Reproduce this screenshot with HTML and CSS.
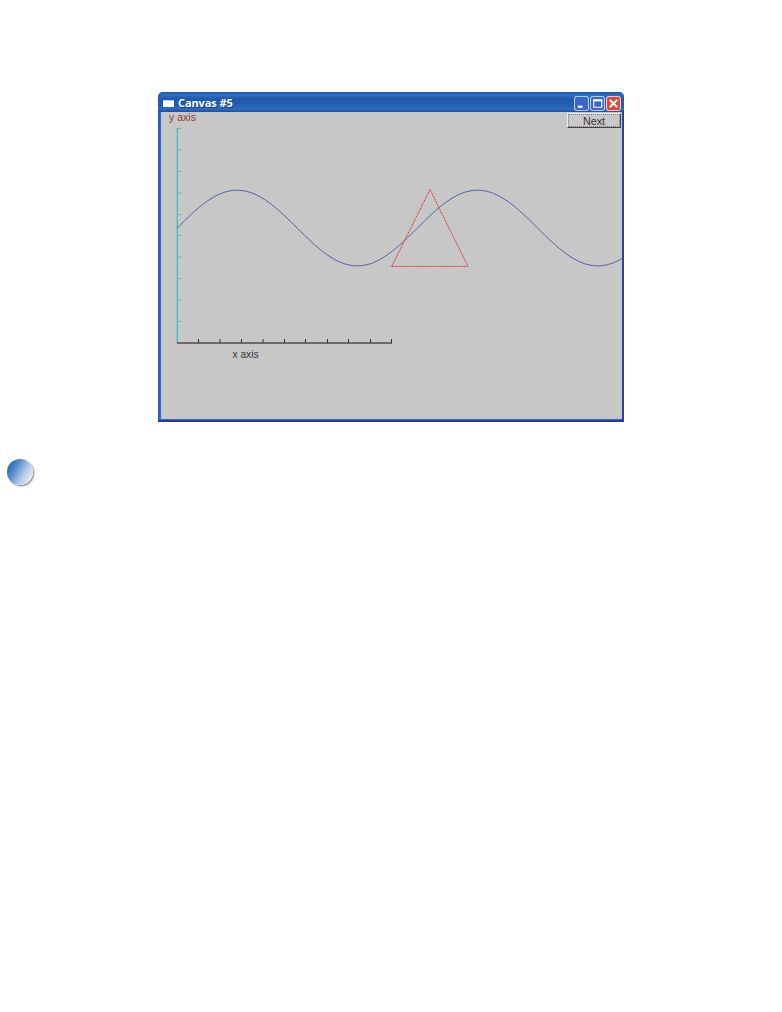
FILE: index.html
```html
<!DOCTYPE html>
<html lang="en">
<head>
<meta charset="utf-8">
<title>Canvas #5</title>
<link rel="stylesheet" href="styles.css">
</head>
<body>
<main class="page">
  <section class="window">
    <header class="titlebar">
      <span class="app-icon"></span>
      <h1 class="title">Canvas #5</h1>
      <div class="controls">
        <svg class="control" viewBox="0 0 14 14"><rect class="blue" x=".5" y=".5" width="13" height="13" rx="2"/><path class="glyph" d="M3.500 10h4.500" stroke-width="2"/></svg>
        <svg class="control" viewBox="0 0 14 14"><rect class="blue" x=".5" y=".5" width="13" height="13" rx="2"/><path class="glyph" d="M3.500 4v6.500h7.500v-6.500" stroke-width="1"/><path class="glyph" d="M3 4h8.500" stroke-width="2"/></svg>
        <svg class="control" viewBox="0 0 14 14"><rect class="red" x=".5" y=".5" width="13" height="13" rx="2"/><path class="glyph" d="M3.500 3.500l7 7M10.500 3.500l-7 7" stroke-width="1.700"/></svg>
      </div>
    </header>
    <div class="content">
      <svg class="plot" viewBox="161 112 461 307">
        <clipPath id="plot-area"><rect x="161" y="112" width="461" height="307"/></clipPath>
        <path class="y-axis" d="M177.300 128V343"/>
        <path class="y-ticks" d="M177 128.500h4M177 150h4M177 171.500h4M177 193h4M177 214.500h4M177 235.500h4M177 257h4M177 278.500h4M177 300h4M177 321.500h4"/>
        <path class="x-axis" d="M177 343h215"/>
        <path class="x-ticks" d="M198.500 339v4M220 339v4M241.500 339v4M263 339v4M284.500 339v4M305.500 339v4M327.500 339v4M348.500 339v4M370.500 339v4M391.500 339v4"/>
        <path class="sine" clip-path="url(#plot-area)" d="M177 228.300C196.600 208.500 215.300 190.200 237.100 190.200C258.900 190.200 277.600 208.500 297.200 228C316.800 247.500 335.500 265.900 357.300 265.900C379.100 265.900 397.800 247.500 417.400 228C437 208.500 455.700 190.200 477.500 190.200C499.300 190.200 518 208.500 537.600 228C557.200 247.500 575.900 265.900 597.700 265.900C619.500 265.900 638.200 247.500 657.800 228"/>
        <path class="triangle" d="M391.700 266.400L430 189.500L468 266.400Z"/>
        <text class="label y-label" x="169" y="120.500" textLength="27" lengthAdjust="spacingAndGlyphs">y axis</text>
        <text class="label" x="232.500" y="358" textLength="26" lengthAdjust="spacingAndGlyphs">x axis</text>
      </svg>
      <button class="next"><span class="next-text"><svg class="next-label" viewBox="0 0 50 13"><text class="label" x="14" y="10.500" textLength="22" lengthAdjust="spacingAndGlyphs">Next</text></svg></span></button>
    </div>
  </section>
  <span class="bullet"></span>
</main>
</body>
</html>
```
FILE: styles.css
```css
* { box-sizing: border-box; }
body { margin: 0; background: #fff; font-family: "Liberation Sans", Arial, sans-serif; }
.page { width: 782px; height: 1012px; padding-top: 92px; overflow: hidden; }
.window {
  display: flex;
  flex-direction: column;
  width: 466px;
  height: 330px;
  margin-left: 158px;
  border-radius: 5px 5px 0 0;
  background: linear-gradient(90deg, #2a52ae, #2e6ac8 2px, #2e6ac8 461px, #3a68bd 463px, #263f9c 465px);
  border-bottom: 2px solid #2a3a96;
}
.titlebar {
  display: flex;
  align-items: center;
  height: 20px;
  padding: 2px 4px 0 5px;
  border-radius: 5px 5px 0 0;
  background: linear-gradient(#1d55a0, #2d6fc3 3px, #2158a9 7px, #2360b6 14px, #2b6bc3 17px, #1f4fa0);
}
.app-icon { width: 11px; height: 7px; margin-top: 1px; background: #fff; border-top: 1px solid #b8d0f0; }
.title {
  margin: 0 0 0 4px;
  color: #fff;
  font: bold 11px/16px "Open Sans", sans-serif;
  letter-spacing: -.1px;
  text-shadow: 1px 1px 0 #173e82;
}
.controls { display: flex; gap: 1px; margin-left: auto; padding-top: 1px; }
.control { display: block; width: 15px; height: 15px; }
.control:last-child { margin-right: -1px; }
.control:first-child { margin-right: 0; }
.blue { fill: #3867c4; stroke: #b5caec; }
.red { fill: #da4b35; stroke: #f2c9c6; }
.glyph { fill: none; stroke: #fff; }
.content {
  position: relative;
  width: 461px;
  height: 307px;
  margin-left: 3px;
  background: #c7c7c7;
}
.plot { display: block; width: 461px; height: 307px; overflow: visible; }
.plot path { fill: none; }
.plot .y-axis { stroke: #50bfc0; stroke-width: 1.5; }
.plot .y-ticks { stroke: #50b5b6; }
.plot .x-axis { stroke: #4c4c4c; stroke-width: 1.4; }
.plot .x-ticks { stroke: #303030; }
.plot .sine { stroke: #5660a4; }
.plot .triangle { stroke: #e23a40; stroke-dasharray: 2.2 .8; }
.label { font: 11.5px "Liberation Sans", Arial, sans-serif; fill: #333; }
.y-label { fill: #963940; }
.next {
  position: absolute;
  top: 1px;
  right: 1px;
  width: 54px;
  height: 15px;
  padding: 0;
  border: 1px solid;
  border-color: #eee #444 #444 #eee;
  background: #c9c9c9;
}
.next-text { display: block; height: 13px; border: 1px dotted #777; }
.next-label { display: block; width: 50px; height: 13px; margin-top: -1px; }
.bullet {
  display: block;
  width: 26px;
  height: 26px;
  margin: 37px 0 0 7px;
  border-radius: 50%;
  background: linear-gradient(120deg, #0f5fb3 5%, #5c8fcd 35%, #b3c7e8 62%, #f2f5fb 92%);
  box-shadow: 1px 1px 2px #777;
}
```
